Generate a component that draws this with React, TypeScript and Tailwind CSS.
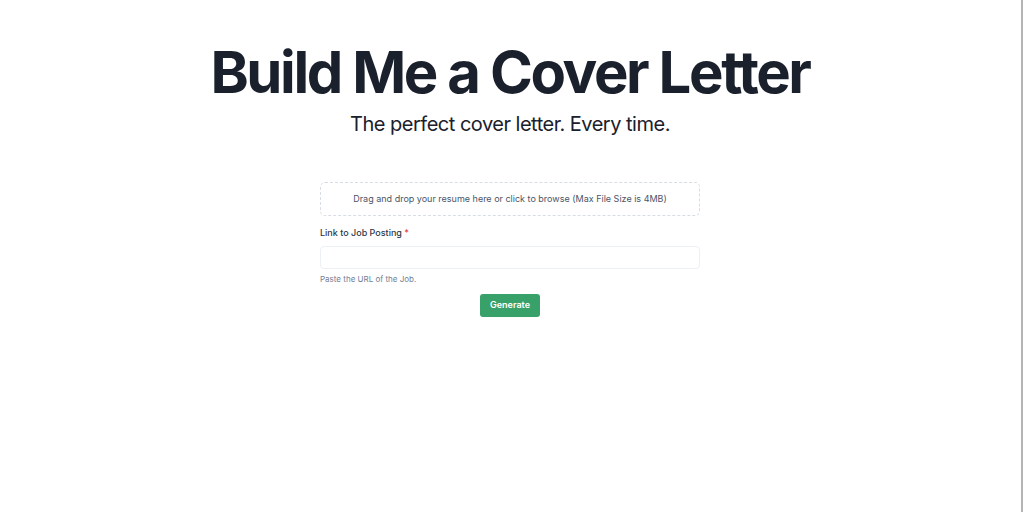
import React from "react";

export default function App() {
  return (
    <div className="flex min-h-[512px] w-full bg-white font-['Inter',sans-serif]">
      <div className="flex flex-1 flex-col items-center">
        <h1 className="mt-[42px] text-[58px] font-bold leading-[60px] tracking-[-2.4px] text-[#1a202c]">
          Build Me a Cover Letter
        </h1>
        <p className="mt-[8px] text-[20px] leading-[28px] tracking-[-0.5px] text-[#1a202c]">
          The perfect cover letter. Every time.
        </p>

        <div className="mt-[44px] flex w-[380px] flex-col">
          <div className="flex h-[34px] items-center justify-center rounded-[5px] border border-dashed border-[#d8dde4] text-[9px] text-[#4a5568]">
            Drag and drop your resume here or click to browse (Max File Size is 4MB)
          </div>

          <label className="mt-[10px] text-[9px] font-medium text-[#2d3748]">
            Link to Job Posting <span className="text-[#e53e3e]">*</span>
          </label>
          <input
            type="text"
            className="mt-[6px] h-[23px] rounded-[4px] border border-[#edf0f4] outline-none"
          />
          <p className="mt-[4px] text-[8px] text-[#718096]">Paste the URL of the Job.</p>

          <div className="mt-[9px] flex justify-center">
            <button className="h-[23px] w-[60px] rounded-[3px] bg-[#38a169] text-[9px] font-semibold text-white">
              Generate
            </button>
          </div>
        </div>
      </div>
      <div className="w-[1px] bg-white" />
      <div className="w-[2px] bg-[#b4b4b4]" />
      <div className="w-[1px] bg-white" />
    </div>
  );
}
